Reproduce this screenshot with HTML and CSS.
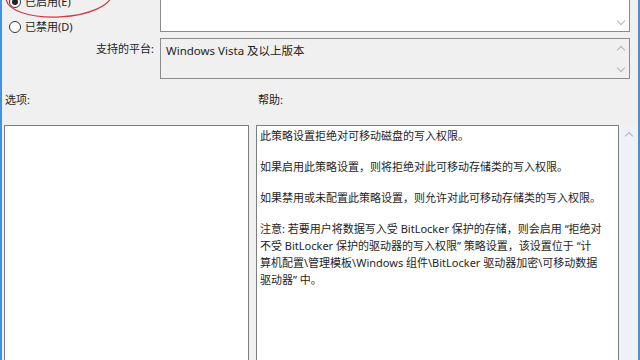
FILE: index.html
```html
<!DOCTYPE html>
<html lang="zh-CN">
<head>
<meta charset="utf-8">
<link rel="stylesheet" href="styles.css">
</head>
<body>
<div class="window">
  <div class="top">
    <div class="radios">
      <label class="radio"><span class="dot checked"></span>已启用(E)</label>
      <label class="radio"><span class="dot"></span>已禁用(D)</label>
    </div>
    <div class="box comment">
      <div class="box-body"></div>
      <div class="scroll"><span class="arrow down"></span></div>
    </div>
    <div class="field-label">支持的平台:</div>
    <div class="box platform">
      <div class="box-body">Windows Vista 及以上版本</div>
      <div class="scroll"><span class="arrow up"></span><span class="arrow down"></span></div>
    </div>
  </div>
  <div class="labels">
    <div class="lbl-options">选项:</div>
    <div class="lbl-help">帮助:</div>
  </div>
  <div class="panes">
    <div class="options"></div>
    <div class="help">
      <div class="help-text">
        <p>此策略设置拒绝对可移动磁盘的写入权限。</p>
        <p>如果启用此策略设置，则将拒绝对此可移动存储类的写入权限。</p>
        <p>如果禁用或未配置此策略设置，则允许对此可移动存储类的写入权限。</p>
        <p>注意: 若要用户将数据写入受 BitLocker 保护的存储，则会启用 “拒绝对<br>不受 BitLocker 保护的驱动器的写入权限” 策略设置，该设置位于 “计<br>算机配置\管理模板\Windows 组件\BitLocker 驱动器加密\可移动数据<br>驱动器” 中。</p>
      </div>
      <div class="help-scroll"><span class="arrow up"></span></div>
    </div>
  </div>
  <svg class="circle-mark" width="130" height="30" viewBox="0 0 130 30">
    <ellipse cx="57" cy="-4" rx="53" ry="21" transform="rotate(-3 57 -4)" fill="none" stroke="#d2383f" stroke-width="1.2"/>
  </svg>
</div>
</body>
</html>
```

FILE: styles.css
```css
* { box-sizing: border-box; }
html, body { margin: 0; padding: 0; }
body {
  width: 640px;
  height: 360px;
  overflow: hidden;
  background: #f0f0f0;
  font-family: "Noto Sans", "Noto Sans CJK SC", sans-serif;
  font-size: 11px;
  color: #1e1e1e;
}
.window {
  position: relative;
  height: 360px;
  border-left: 2px solid #4b8fd6;
  border-right: 2px solid #4b8fd6;
  display: flex;
  flex-direction: column;
}
.top {
  display: grid;
  grid-template-columns: 158px 470px;
  grid-template-rows: 72px 41px;
  row-gap: 6px;
  margin-top: -40px;
}
.radios {
  display: flex;
  flex-direction: column;
  gap: 11px;
  padding: 35px 0 0 7px;
}
.radio {
  display: flex;
  align-items: center;
  gap: 4px;
  height: 14px;
  line-height: 14px;
  font-family: "Noto Sans", "Noto Sans CJK SC", sans-serif;
}
.dot {
  width: 12px;
  height: 12px;
  border: 1px solid #333;
  border-radius: 50%;
  background: #fff;
  display: inline-flex;
  align-items: center;
  justify-content: center;
}
.dot.checked::after {
  content: "";
  width: 6px;
  height: 6px;
  border-radius: 50%;
  background: #222;
}
.box {
  display: flex;
  border: 1px solid #8c8c8c;
}
.box-body { flex: 1; padding: 4px 5px; font-size: 11.5px; }
.comment { background: #fff; }
.platform { background: #f0f0f0; }
.platform .box-body { padding: 3px 5px; }
.scroll {
  width: 17px;
  display: flex;
  flex-direction: column;
  justify-content: space-between;
  align-items: center;
  padding: 6px 0 4px;
}
.comment .scroll { justify-content: flex-end; }
.arrow {
  width: 6px;
  height: 6px;
  border-left: 1px solid #b4b4b4;
  border-top: 1px solid #b4b4b4;
  display: block;
}
.arrow.up { transform: rotate(45deg); margin-top: 2px; }
.arrow.down { transform: rotate(225deg); margin-bottom: 3px; }
.field-label {
  text-align: right;
  padding: 2px 6px 0 0;
}
.labels {
  display: flex;
  height: 46px;
  padding: 12px 0 0 3px;
}
.lbl-options { width: 253px; }
.panes {
  display: flex;
  gap: 7px;
  padding-left: 2px;
  flex: 1;
  min-width: 0;
}
.options {
  flex: 0 0 245px;
  background: #fff;
  border: 1px solid #7e7e7e;
  margin-bottom: -4px;
}
.help {
  flex: 1;
  min-width: 0;
  display: flex;
  margin-bottom: -4px;
}
.help-text {
  flex: 1;
  min-width: 0;
  overflow: hidden;
  background: #fff;
  border: 1px solid #7e7e7e;
  padding: 1px 3px;
  line-height: 17px;
  white-space: nowrap;
}
.help-text p { margin: 0 0 14px; }
.help-scroll {
  flex: 0 0 19px;
  background: #eef1f6;
  display: flex;
  justify-content: center;
  padding-top: 6px;
}
.circle-mark {
  position: absolute;
  left: 0;
  top: 0;
  pointer-events: none;
}
```
